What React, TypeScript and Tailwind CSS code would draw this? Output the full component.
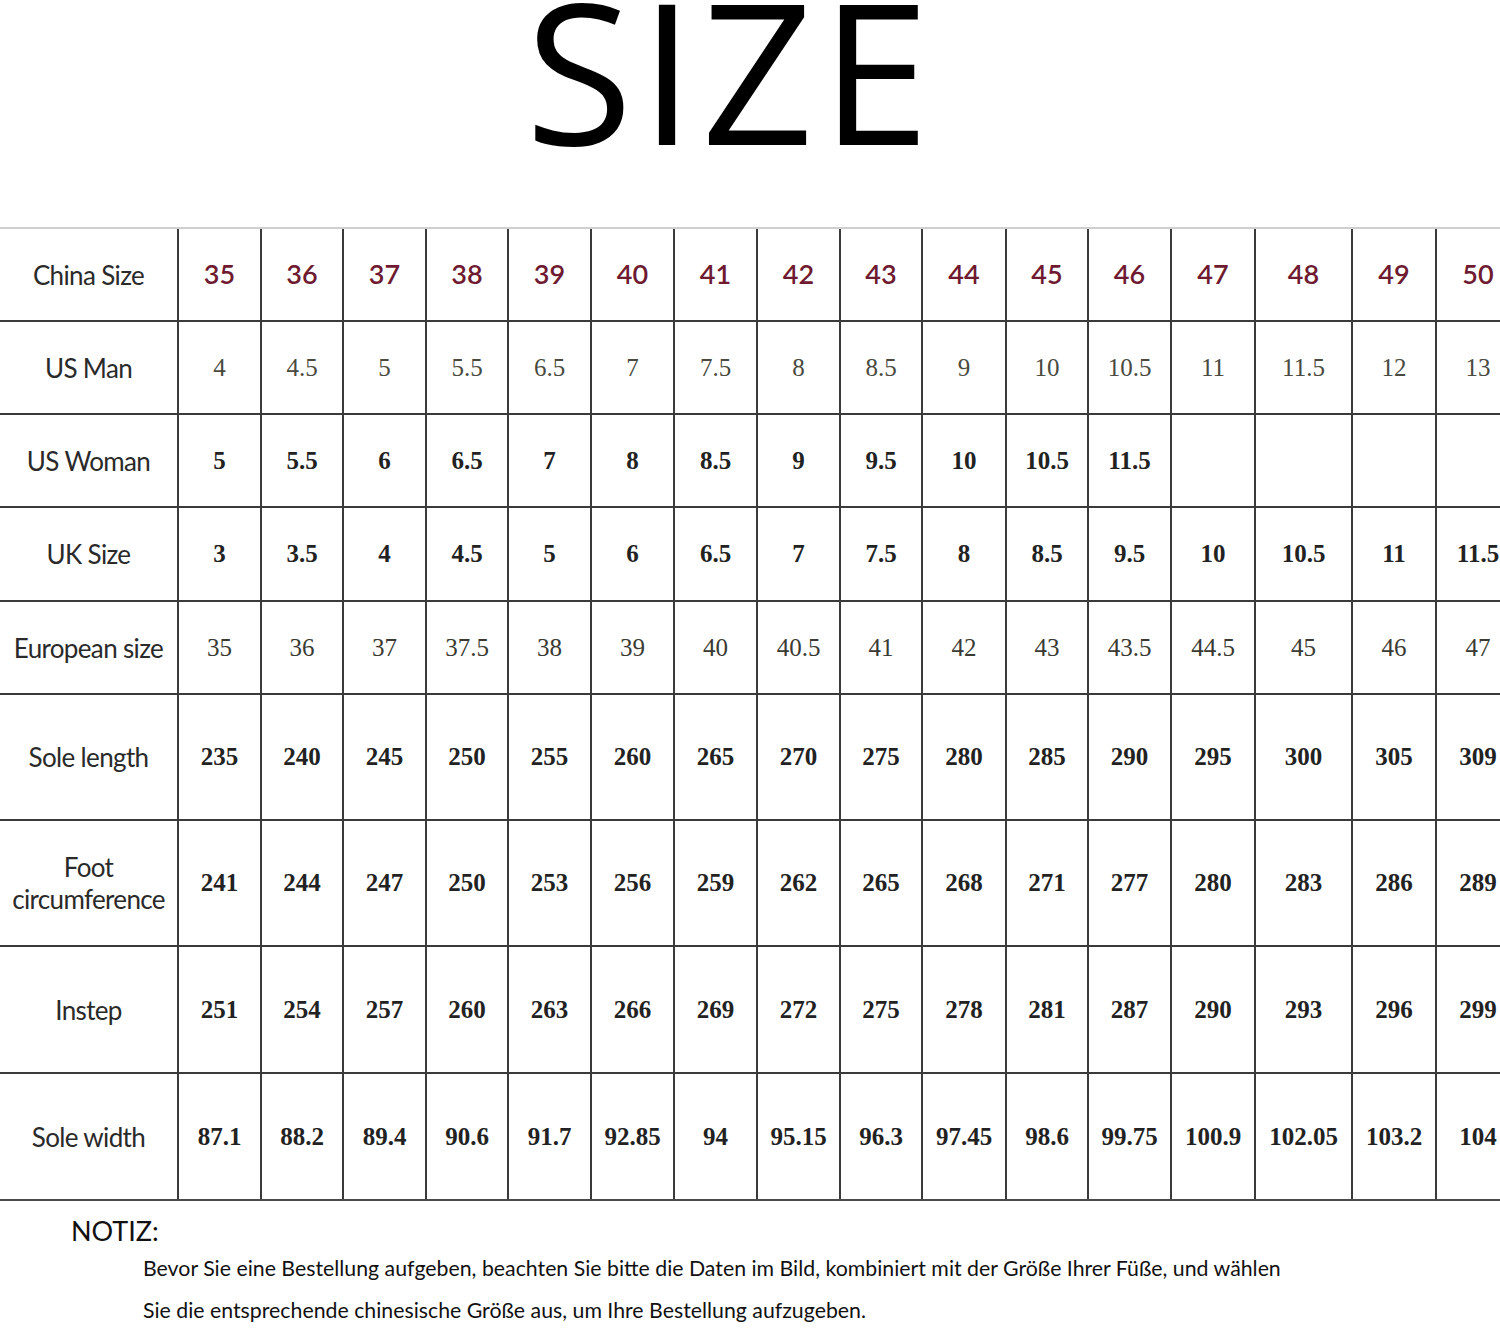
const labels = [
  'China Size',
  'US Man',
  'US Woman',
  'UK Size',
  'European size',
  'Sole length',
  'Foot circumference',
  'Instep',
  'Sole width',
];

const rows: string[][] = [
  ['35', '36', '37', '38', '39', '40', '41', '42', '43', '44', '45', '46', '47', '48', '49', '50'],
  ['4', '4.5', '5', '5.5', '6.5', '7', '7.5', '8', '8.5', '9', '10', '10.5', '11', '11.5', '12', '13'],
  ['5', '5.5', '6', '6.5', '7', '8', '8.5', '9', '9.5', '10', '10.5', '11.5', '', '', '', ''],
  ['3', '3.5', '4', '4.5', '5', '6', '6.5', '7', '7.5', '8', '8.5', '9.5', '10', '10.5', '11', '11.5'],
  ['35', '36', '37', '37.5', '38', '39', '40', '40.5', '41', '42', '43', '43.5', '44.5', '45', '46', '47'],
  ['235', '240', '245', '250', '255', '260', '265', '270', '275', '280', '285', '290', '295', '300', '305', '309'],
  ['241', '244', '247', '250', '253', '256', '259', '262', '265', '268', '271', '277', '280', '283', '286', '289'],
  ['251', '254', '257', '260', '263', '266', '269', '272', '275', '278', '281', '287', '290', '293', '296', '299'],
  ['87.1', '88.2', '89.4', '90.6', '91.7', '92.85', '94', '95.15', '96.3', '97.45', '98.6', '99.75', '100.9', '102.05', '103.2', '104'],
];

function valueClass(row: number) {
  if (row === 0) return "font-['Lato',sans-serif] text-[27px] font-semibold text-[#6e1a30]";
  if (row === 1) return "font-['Liberation_Serif',serif] text-[25px] text-[#4a4a40]";
  if (row === 4) return "font-['Liberation_Serif',serif] text-[25px] text-[#3a3a32]";
  return "font-['Liberation_Serif',serif] text-[25px] font-bold text-[#222]";
}

export default function App() {
  return (
    <div className="h-[1329px] w-full overflow-hidden bg-white">
      {/* Title */}
      <div className="flex h-[227px] justify-center pr-[38px]">
        <h1 className="font-['Open_Sans',sans-serif] text-[196px] font-normal leading-[138px] tracking-[7px] text-black">
          SIZE
        </h1>
      </div>

      {/* Size table */}
      <div className="grid w-max grid-cols-[177px_81px_80px_81px_80px_81px_81px_81px_81px_80px_82px_80px_81px_82px_95px_82px_82px] grid-rows-[91px_91px_91px_92px_91px_124px_124px_125px_125px] gap-[2px] border-t-2 border-b-2 border-t-[#cfcfcf] border-b-[#4a4a4a] bg-[#3a3a3a]">
        {labels.map((label, r) => (
          <>
            <div
              key={label}
              className="flex items-center justify-center bg-white text-center font-['Lato',sans-serif] text-[26px] leading-[32px] tracking-tight text-[#2a2a2a]"
            >
              {label === 'Foot circumference' ? (
                <span>
                  Foot
                  <br />
                  circumference
                </span>
              ) : (
                label
              )}
            </div>
            {rows[r].map((v, c) => (
              <div
                key={label + c}
                className={`flex items-center justify-center whitespace-nowrap bg-white ${valueClass(r)}`}
              >
                {v}
              </div>
            ))}
          </>
        ))}
      </div>

      {/* Note */}
      <div className="pl-[71px] pt-[14px] font-['Lato',sans-serif] text-[#111]">
        <p className="text-[27px] leading-[32px]">NOTIZ:</p>
        <div className="pl-[72px] text-[21.3px] leading-[42px]">
          <p>
            Bevor Sie eine Bestellung aufgeben, beachten Sie bitte die Daten im Bild, kombiniert mit der Größe Ihrer
            Füße, und wählen
          </p>
          <p>Sie die entsprechende chinesische Größe aus, um Ihre Bestellung aufzugeben.</p>
        </div>
      </div>
    </div>
  );
}
